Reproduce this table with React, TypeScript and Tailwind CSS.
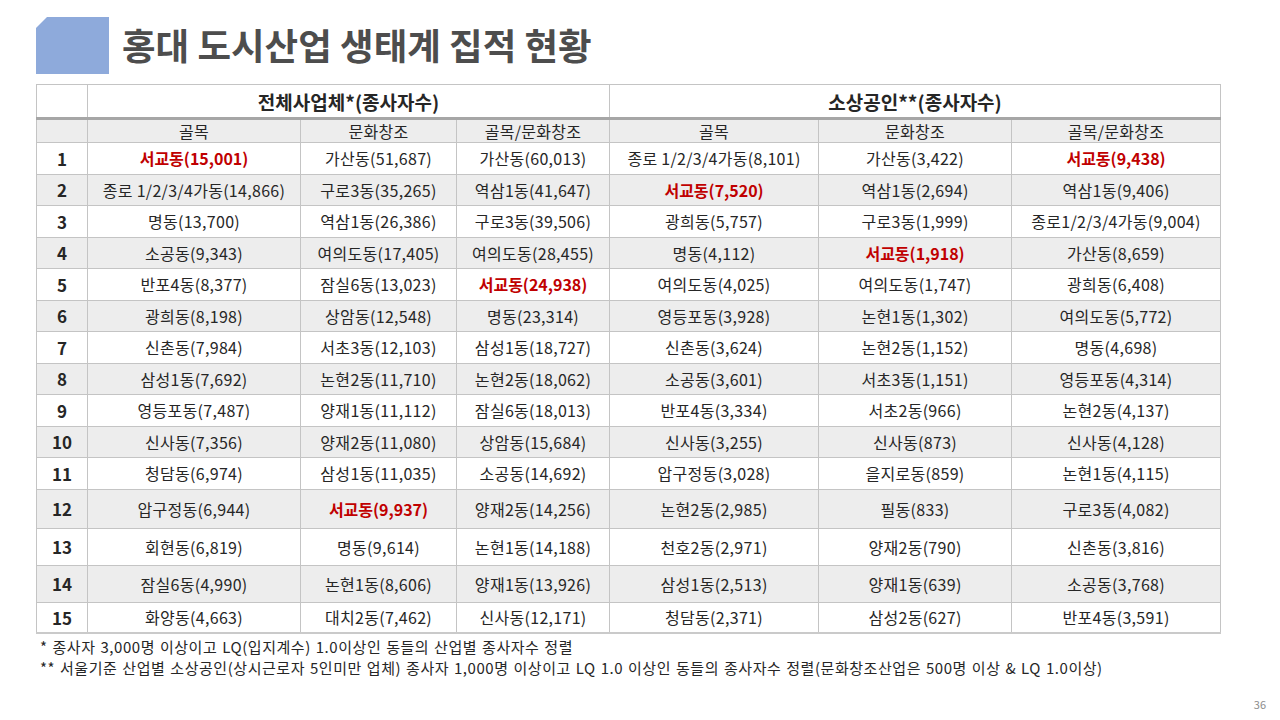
import React from "react";

type Cell = string | { t: string; hot: true };

const hot = (t: string): Cell => ({ t, hot: true });

const rows: { h: string; cells: Cell[] }[] = [
  { h: "h-[31.5px]", cells: [hot("서교동(15,001)"), "가산동(51,687)", "가산동(60,013)", "종로 1/2/3/4가동(8,101)", "가산동(3,422)", hot("서교동(9,438)")] },
  { h: "h-[31.5px]", cells: ["종로 1/2/3/4가동(14,866)", "구로3동(35,265)", "역삼1동(41,647)", hot("서교동(7,520)"), "역삼1동(2,694)", "역삼1동(9,406)"] },
  { h: "h-[31.5px]", cells: ["명동(13,700)", "역삼1동(26,386)", "구로3동(39,506)", "광희동(5,757)", "구로3동(1,999)", "종로1/2/3/4가동(9,004)"] },
  { h: "h-[31.5px]", cells: ["소공동(9,343)", "여의도동(17,405)", "여의도동(28,455)", "명동(4,112)", hot("서교동(1,918)"), "가산동(8,659)"] },
  { h: "h-[31.5px]", cells: ["반포4동(8,377)", "잠실6동(13,023)", hot("서교동(24,938)"), "여의도동(4,025)", "여의도동(1,747)", "광희동(6,408)"] },
  { h: "h-[31.5px]", cells: ["광희동(8,198)", "상암동(12,548)", "명동(23,314)", "영등포동(3,928)", "논현1동(1,302)", "여의도동(5,772)"] },
  { h: "h-[31.5px]", cells: ["신촌동(7,984)", "서초3동(12,103)", "삼성1동(18,727)", "신촌동(3,624)", "논현2동(1,152)", "명동(4,698)"] },
  { h: "h-[31.5px]", cells: ["삼성1동(7,692)", "논현2동(11,710)", "논현2동(18,062)", "소공동(3,601)", "서초3동(1,151)", "영등포동(4,314)"] },
  { h: "h-[31.5px]", cells: ["영등포동(7,487)", "양재1동(11,112)", "잠실6동(18,013)", "반포4동(3,334)", "서초2동(966)", "논현2동(4,137)"] },
  { h: "h-[31.5px]", cells: ["신사동(7,356)", "양재2동(11,080)", "상암동(15,684)", "신사동(3,255)", "신사동(873)", "신사동(4,128)"] },
  { h: "h-[31.5px]", cells: ["청담동(6,974)", "삼성1동(11,035)", "소공동(14,692)", "압구정동(3,028)", "을지로동(859)", "논현1동(4,115)"] },
  { h: "h-[39px]", cells: ["압구정동(6,944)", hot("서교동(9,937)"), "양재2동(14,256)", "논현2동(2,985)", "필동(833)", "구로3동(4,082)"] },
  { h: "h-[37px]", cells: ["회현동(6,819)", "명동(9,614)", "논현1동(14,188)", "천호2동(2,971)", "양재2동(790)", "신촌동(3,816)"] },
  { h: "h-[37px]", cells: ["잠실6동(4,990)", "논현1동(8,606)", "양재1동(13,926)", "삼성1동(2,513)", "양재1동(639)", "소공동(3,768)"] },
  { h: "h-[31px]", cells: ["화양동(4,663)", "대치2동(7,462)", "신사동(12,171)", "청담동(2,371)", "삼성2동(627)", "반포4동(3,591)"] },
];

const subHeads = ["골목", "문화창조", "골목/문화창조", "골목", "문화창조", "골목/문화창조"];

export default function App() {
  return (
    <div className="relative h-[720px] w-[1280px] overflow-hidden bg-white font-['Noto_Sans_CJK_KR',sans-serif] text-[#262626]">
      {/* Title */}
      <div className="flex items-center pl-[36px] pt-[17px]">
        <div className="h-[57px] w-[73px] bg-[#8eaadb] [clip-path:polygon(11px_0,100%_0,100%_100%,0_100%,0_11px)]" />
        <h1 className="ml-[13px] text-[36.5px] font-bold leading-none text-[#4d4d4d]">
          홍대 도시산업 생태계 집적 현황
        </h1>
      </div>

      {/* Table */}
      <table className="ml-[36px] mt-[10px] w-[1184px] table-fixed border-collapse border-b-2 border-b-[#cacaca] text-center text-[16px] leading-none">
        <colgroup>
          <col className="w-[51px]" />
          <col className="w-[213px]" />
          <col className="w-[156px]" />
          <col className="w-[153px]" />
          <col className="w-[209px]" />
          <col className="w-[193px]" />
          <col className="w-[209px]" />
        </colgroup>
        <thead>
          <tr className="h-[34px] border-b-[3px] border-b-[#a6a6a6]">
            <th className="border border-[#c4c4c4]" />
            <th colSpan={3} className="border border-[#c4c4c4] text-[19px] font-bold">전체사업체*(종사자수)</th>
            <th colSpan={3} className="border border-[#c4c4c4] text-[19px] font-bold">소상공인**(종사자수)</th>
          </tr>
          <tr className="h-[24px] bg-[#ededed]">
            <th className="border border-[#c4c4c4]" />
            {subHeads.map((s, i) => (
              <th key={i} className="border border-[#c4c4c4] font-normal tracking-[0.3px]">{s}</th>
            ))}
          </tr>
        </thead>
        <tbody>
          {rows.map((r, i) => (
            <tr key={i} className={`${r.h} ${i % 2 === 1 ? "bg-[#ededed]" : "bg-white"}`}>
              <td className="border border-[#c4c4c4] text-[17px] font-bold">{i + 1}</td>
              {r.cells.map((c, j) =>
                typeof c === "string" ? (
                  <td key={j} className="border border-[#c4c4c4] tracking-[0.3px]">{c}</td>
                ) : (
                  <td key={j} className="border border-[#c4c4c4] font-bold text-[#c00000]">{c.t}</td>
                )
              )}
            </tr>
          ))}
        </tbody>
      </table>

      {/* Notes */}
      <div className="ml-[40px] mt-[2px] text-[15px] leading-[21px] tracking-[0.55px] [word-spacing:1px]">
        <p>* 종사자 3,000명 이상이고 LQ(입지계수) 1.0이상인 동들의 산업별 종사자수 정렬</p>
        <p>** 서울기준 산업별 소상공인(상시근로자 5인미만 업체) 종사자 1,000명 이상이고 LQ 1.0 이상인 동들의 종사자수 정렬(문화창조산업은 500명 이상 &amp; LQ 1.0이상)</p>
      </div>

      <div className="absolute bottom-[8px] right-[14px] text-[11px] text-[#8c8c8c]">36</div>
    </div>
  );
}
